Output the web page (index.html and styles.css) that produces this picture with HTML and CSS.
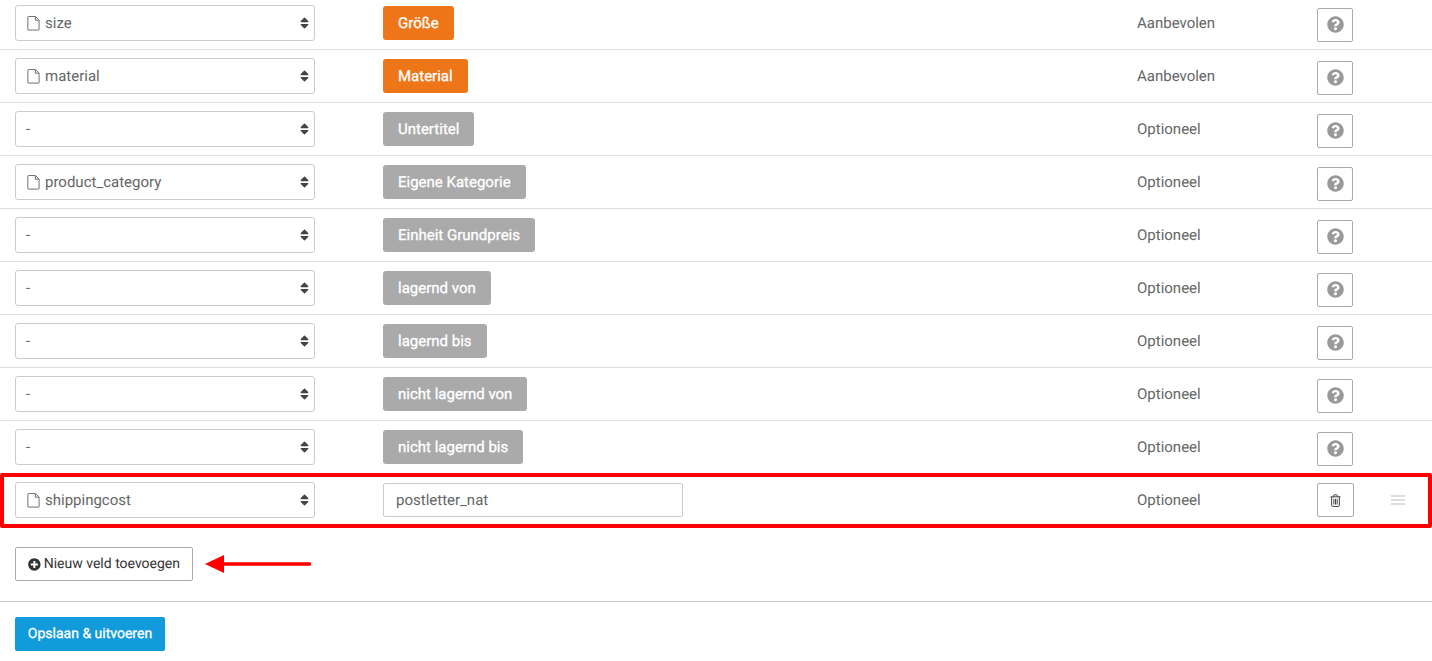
FILE: index.html
```html
<!DOCTYPE html>
<html lang="nl">
<head>
<meta charset="utf-8">
<title>Veldtoewijzing</title>
<link rel="stylesheet" href="styles.css">
</head>
<body>
<svg class="defs" aria-hidden="true">
  <symbol id="file" viewBox="0 0 14 16"><path d="M1.5 .5h7.6l3.9 3.9v10.1a.6.6 0 0 1-.6.6H1.5a.6.6 0 0 1-.6-.6V1.100a.6.6 0 0 1 .6-.6zM9 .7v3.800h3.800" fill="none" stroke="currentColor" stroke-width="1"/></symbol>
  <symbol id="sort" viewBox="0 0 320 512"><path fill="currentColor" d="M41 288h238c21.400 0 32.100 25.900 17 41L177 448c-9.400 9.400-24.600 9.400-33.900 0L24 329c-15.100-15.100-4.400-41 17-41zm255-105L177 64c-9.400-9.400-24.600-9.400-33.900 0L24 183c-15.100 15.100-4.400 41 17 41h238c21.400 0 32.100-25.900 17-41z"/></symbol>
  <symbol id="help" viewBox="0 0 512 512"><path fill="currentColor" d="M504 256c0 136.997-111.043 248-248 248S8 392.997 8 256C8 119.083 119.043 8 256 8s248 111.083 248 248zM262.655 90c-54.497 0-89.255 22.957-116.549 63.758-3.536 5.286-2.353 12.415 2.715 16.258l34.699 26.310c5.205 3.947 12.621 3.008 16.665-2.122 17.864-22.658 30.113-35.797 57.303-35.797 20.429 0 45.698 13.148 45.698 32.958 0 14.976-12.363 22.667-32.534 33.976C247.128 238.528 216 254.941 216 296v4c0 6.627 5.373 12 12 12h56c6.627 0 12-5.373 12-12v-1.333c0-28.462 83.186-29.647 83.186-106.667 0-58.002-60.165-102-116.531-102zM256 338c-25.365 0-46 20.635-46 46 0 25.364 20.635 46 46 46s46-20.636 46-46c0-25.365-20.635-46-46-46z"/></symbol>
</svg>

<main class="page">
  <div class="rows">
    <div class="row">
      <div class="select"><svg class="file"><use href="#file"/></svg><span class="select-text">size</span><svg class="sort"><use href="#sort"/></svg></div>
      <div><span class="label label-orange">Größe</span></div>
      <div class="status">Aanbevolen</div>
      <div class="actions"><button class="icon-btn icon-btn-help"><svg class="help"><use href="#help"/></svg></button></div>
    </div>
    <div class="row">
      <div class="select"><svg class="file"><use href="#file"/></svg><span class="select-text">material</span><svg class="sort"><use href="#sort"/></svg></div>
      <div><span class="label label-orange">Material</span></div>
      <div class="status">Aanbevolen</div>
      <div class="actions"><button class="icon-btn icon-btn-help"><svg class="help"><use href="#help"/></svg></button></div>
    </div>
    <div class="row">
      <div class="select"><span class="select-text">-</span><svg class="sort"><use href="#sort"/></svg></div>
      <div><span class="label">Untertitel</span></div>
      <div class="status">Optioneel</div>
      <div class="actions"><button class="icon-btn icon-btn-help"><svg class="help"><use href="#help"/></svg></button></div>
    </div>
    <div class="row">
      <div class="select"><svg class="file"><use href="#file"/></svg><span class="select-text">product_category</span><svg class="sort"><use href="#sort"/></svg></div>
      <div><span class="label">Eigene Kategorie</span></div>
      <div class="status">Optioneel</div>
      <div class="actions"><button class="icon-btn icon-btn-help"><svg class="help"><use href="#help"/></svg></button></div>
    </div>
    <div class="row">
      <div class="select"><span class="select-text">-</span><svg class="sort"><use href="#sort"/></svg></div>
      <div><span class="label">Einheit Grundpreis</span></div>
      <div class="status">Optioneel</div>
      <div class="actions"><button class="icon-btn icon-btn-help"><svg class="help"><use href="#help"/></svg></button></div>
    </div>
    <div class="row">
      <div class="select"><span class="select-text">-</span><svg class="sort"><use href="#sort"/></svg></div>
      <div><span class="label">lagernd von</span></div>
      <div class="status">Optioneel</div>
      <div class="actions"><button class="icon-btn icon-btn-help"><svg class="help"><use href="#help"/></svg></button></div>
    </div>
    <div class="row">
      <div class="select"><span class="select-text">-</span><svg class="sort"><use href="#sort"/></svg></div>
      <div><span class="label">lagernd bis</span></div>
      <div class="status">Optioneel</div>
      <div class="actions"><button class="icon-btn icon-btn-help"><svg class="help"><use href="#help"/></svg></button></div>
    </div>
    <div class="row">
      <div class="select"><span class="select-text">-</span><svg class="sort"><use href="#sort"/></svg></div>
      <div><span class="label">nicht lagernd von</span></div>
      <div class="status">Optioneel</div>
      <div class="actions"><button class="icon-btn icon-btn-help"><svg class="help"><use href="#help"/></svg></button></div>
    </div>
    <div class="row">
      <div class="select"><span class="select-text">-</span><svg class="sort"><use href="#sort"/></svg></div>
      <div><span class="label">nicht lagernd bis</span></div>
      <div class="status">Optioneel</div>
      <div class="actions"><button class="icon-btn icon-btn-help"><svg class="help"><use href="#help"/></svg></button></div>
    </div>
    <div class="row row-custom">
      <div class="select"><svg class="file"><use href="#file"/></svg><span class="select-text">shippingcost</span><svg class="sort"><use href="#sort"/></svg></div>
      <div><input class="text-input" type="text" value="postletter_nat"></div>
      <div class="status">Optioneel</div>
      <div class="actions">
        <button class="icon-btn icon-btn-wide">
          <svg class="trash" viewBox="0 0 12 14"><path d="M.5 3h11M4 3V1.500a.7.700 0 0 1 .7-.7h2.600a.7.700 0 0 1 .7.700V3M1.800 3v9.300c0 .7.500 1.200 1.100 1.200h6.200c.6 0 1.100-.5 1.100-1.200V3" fill="none" stroke="currentColor" stroke-width="1"/><path d="M4.200 5.200v6.200M6 5.200v6.200M7.800 5.200v6.200" fill="none" stroke="currentColor" stroke-width="1"/></svg>
        </button>
        <span class="drag"><i></i><i></i><i></i></span>
      </div>
      <div class="highlight"></div>
    </div>
  </div>

  <div class="add-area">
    <button class="add-btn">
      <svg class="plus" viewBox="0 0 512 512"><path fill="currentColor" d="M256 8C119 8 8 119 8 256s111 248 248 248 248-111 248-248S393 8 256 8zm144 276c0 6.600-5.400 12-12 12h-92v92c0 6.600-5.400 12-12 12h-56c-6.600 0-12-5.400-12-12v-92h-92c-6.600 0-12-5.400-12-12v-56c0-6.600 5.400-12 12-12h92v-92c0-6.600 5.400-12 12-12h56c6.600 0 12 5.400 12 12v92h92c6.600 0 12 5.400 12 12v56z"/></svg><span class="add-text">Nieuw veld toevoegen</span>
    </button>
    <svg class="arrow" viewBox="0 0 106 18"><path d="M0 9 L19 0 V18 Z" fill="#f00"/><path d="M18 9H104.500" stroke="#f00" stroke-width="3.500" stroke-linecap="round"/></svg>
  </div>

  <div class="footer">
    <button class="save-btn"><span class="save-text">Opslaan &amp; uitvoeren</span></button>
  </div>
</main>
</body>
</html>
```

FILE: styles.css
```css
* {
  box-sizing: border-box;
}

html,
body {
  margin: 0;
  background: #fff;
  overflow: hidden;
}

body {
  font-family: Roboto, "Liberation Sans", sans-serif;
  font-size: 15px;
  color: #666;
  text-rendering: geometricPrecision;
}

.defs {
  display: none;
}

.page {
  margin-top: -3px;
}

.row {
  position: relative;
  display: grid;
  grid-template-columns: 368px 754px 180px 1fr;
  align-items: center;
  height: 53px;
  padding-left: 15px;
  border-bottom: 1px solid #ddd;
}

.row-custom {
  border-bottom-color: transparent;
}

.select {
  display: flex;
  align-items: center;
  width: 300px;
  height: 36px;
  padding: 0 5px 0 10px;
  background: #fff;
  border: 1px solid #ccc;
  border-radius: 3px;
  color: #666;
}

.select-text {
  flex: 1;
  white-space: nowrap;
}

.file {
  width: 13px;
  height: 15px;
  margin: 0 5px 0 1px;
  color: #666;
}

.sort {
  width: 9px;
  height: 14px;
  color: #444;
}

.label {
  display: inline-flex;
  align-items: center;
  height: 34px;
  padding: 0 15px;
  background: #aaa;
  border-radius: 3px;
  color: #fff;
  font-weight: 400;
  -webkit-text-stroke: 0.3px #fff;
  vertical-align: middle;
}

.label-orange {
  background: #ee7518;
}

.status {
  color: #666;
}

.actions {
  display: flex;
  align-items: center;
  gap: 37px;
}

.icon-btn {
  display: flex;
  align-items: center;
  justify-content: center;
  width: 36px;
  height: 34px;
  padding: 0;
  background: #fff;
  border: 1px solid #aaa;
  border-radius: 2px;
}

.icon-btn-help {
  margin-top: 4px;
}

.icon-btn-wide {
  width: 37px;
}

.help {
  width: 17px;
  height: 17px;
  margin-bottom: 2px;
  color: #999;
}

.trash {
  width: 11px;
  height: 13px;
  color: #333;
}

.drag {
  display: flex;
  flex-direction: column;
  gap: 2px;
  width: 14px;
}

.drag i {
  display: block;
  height: 2px;
  background: #ddd;
}

.text-input {
  display: block;
  width: 300px;
  height: 34px;
  padding: 0 12px;
  border: 1px solid #ccc;
  border-radius: 2px;
  background: #fff;
  color: #666;
  font: inherit;
  text-rendering: inherit;
}

.highlight {
  position: absolute;
  inset: -1px 0 -2px;
  border: 4px solid #f00;
  border-radius: 2px;
  pointer-events: none;
}

.add-area {
  display: flex;
  align-items: center;
  gap: 12px;
  height: 75px;
  padding: 20px 0 20px 15px;
  border-bottom: 1px solid #ccc;
}

.add-btn {
  display: flex;
  align-items: center;
  gap: 3px;
  height: 34px;
  width: 178px;
  padding: 0 12px;
  background: #fff;
  border: 1px solid #aaa;
  border-radius: 2px;
  color: #333;
  font-family: inherit;
  font-size: 14px;
  text-rendering: inherit;
  white-space: nowrap;
}

.add-text {
  line-height: 18px;
  padding-bottom: 1px;
}

.plus {
  width: 13px;
  height: 13px;
  color: #333;
}

.arrow {
  width: 106px;
  height: 18px;
}

.footer {
  padding: 15px;
}

.save-btn {
  display: flex;
  align-items: center;
  justify-content: center;
  width: 150px;
  height: 34px;
  padding: 0;
  background: #129bdb;
  border: 0;
  border-radius: 2px;
  color: #fff;
  font-family: inherit;
  font-size: 14px;
  font-weight: 400;
  -webkit-text-stroke: 0.3px #fff;
  text-rendering: inherit;
}

.save-text {
  line-height: 18px;
  padding-bottom: 1px;
}
```
